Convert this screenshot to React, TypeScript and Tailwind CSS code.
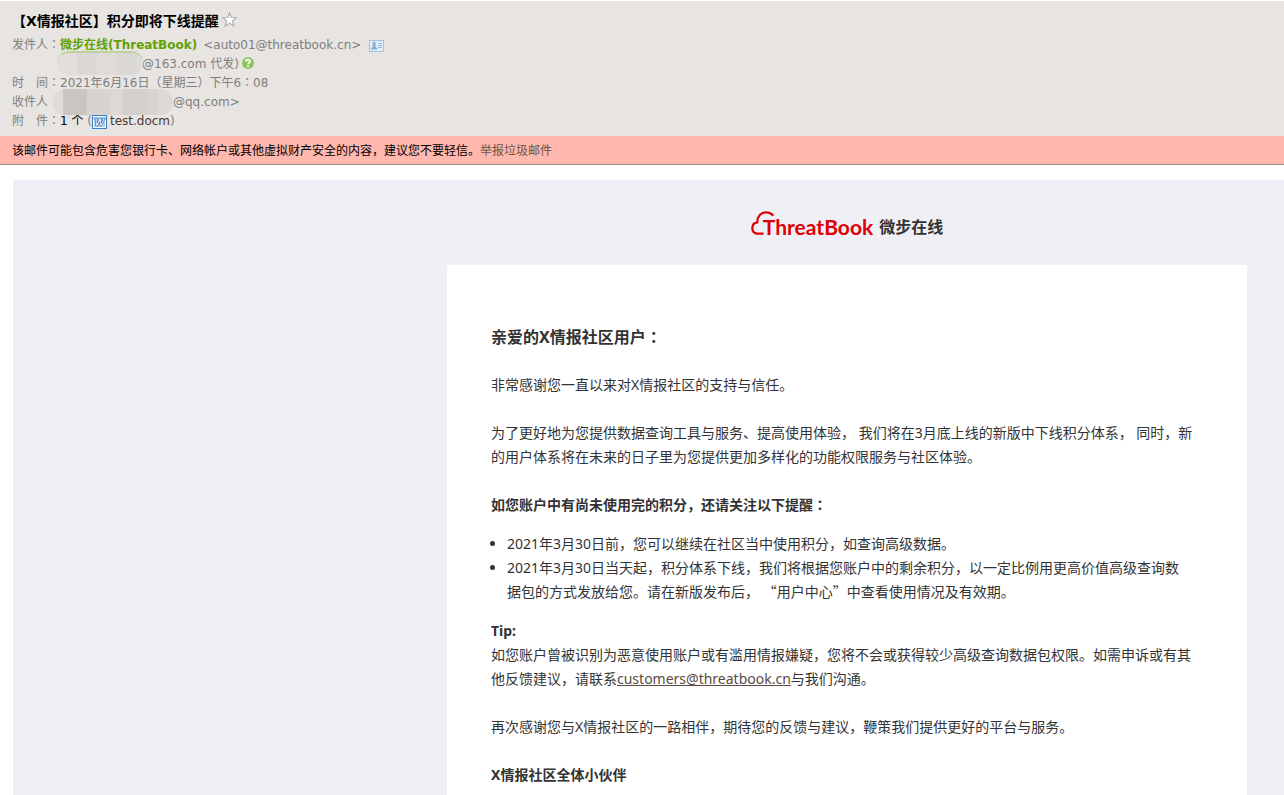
import React from "react";

function StarIcon() {
  return (
    <svg viewBox="0 0 14 14" className="h-[15px] w-[15px]" aria-hidden="true">
      <path d="M7 .8 8.600 5.100 13.300 5.300 9.700 8.300 11 13 7 10.300 3 13 4.300 8.300.7 5.300 5.400 5.100Z" fill="#fff" stroke="#a3abb3" strokeWidth="1" />
    </svg>
  );
}

function ContactIcon() {
  return (
    <svg viewBox="0 0 15 12" className="h-[12px] w-[15px]" aria-hidden="true">
      <rect x=".5" y=".5" width="14" height="11" fill="#e3eef8" stroke="#a3c2e0" />
      <path d="M3.500 3.200a1.600 1.600 0 0 1 3.200 0v1.600c0 1-.4 1.400-.4 1.700 0 .7 2 .8 2 3H2c0-2.200 1.800-2.300 1.800-3 0-.3-.3-.7-.3-1.700Z" fill="#86aed6" />
      <path d="M9 3.500h4M9 5.500h4M9 7.500h4" stroke="#9bb9d6" />
    </svg>
  );
}

function HelpIcon() {
  return (
    <svg viewBox="0 0 12 12" className="h-[12px] w-[12px]" aria-hidden="true">
      <circle cx="6" cy="6" r="6" fill="#8cc65c" />
      <path d="M4 4.600c0-2.600 4-2.600 4-.1 0 1.300-1.900 1.200-1.900 2.800" fill="none" stroke="#fff" strokeWidth="1.600" />
      <rect x="5.200" y="8.300" width="1.700" height="1.700" fill="#fff" />
    </svg>
  );
}

function WordIcon() {
  return (
    <svg viewBox="0 0 15 14" className="h-[14px] w-[15px]" aria-hidden="true">
      <rect x=".5" y=".5" width="14" height="13" fill="#f4f9ff" stroke="#3f7fc4" />
      <rect x="2" y="2" width="11" height="10" fill="#b5d2f0" />
      <path d="M2 3h3.400v1H4.900l.2 4.300L7.400 3h1.700l.2 5.300L11 4h-.8V3H13.500v1h-.8L9.600 11H7.900l-.2-4.400L5.500 11H3.800L3.200 4H2Z" fill="#fff" stroke="#2f6fba" strokeWidth=".7" />
    </svg>
  );
}

function CloudMark() {
  return (
    <svg viewBox="0 -4 24 33" className="h-[33px] w-[24px]" aria-hidden="true">
      <path d="M12.500 23.600H6.200C3.100 23.600 1.300 21.300 1.300 18.200c0-2.900 1.800-5.500 5-5.900C6.200 6.200 10.100 2.400 14.800 2.400c3.200 0 5.800 1.200 7.500 3.300" fill="none" stroke="#dd0005" strokeWidth="2.200" />
    </svg>
  );
}

function Colon() {
  return <span className="font-['Noto_Sans_CJK_TC',sans-serif] leading-none">：</span>;
}

const row = "flex h-[19px] items-center whitespace-pre";

export default function App() {
  return (
    <div className="flex min-h-screen flex-col overflow-x-hidden bg-white font-['Noto_Sans','Noto_Sans_CJK_SC',sans-serif] text-sm leading-6 text-[#333]">
      <header className="mt-px h-[135px] bg-[#e7e4e1] px-3 pt-[11px] font-['DejaVu_Sans','Noto_Sans_CJK_SC',sans-serif] text-xs leading-[19px] text-[#7f7f7f]">
        <div className="flex h-[19px] items-center">
          <h1 className="text-sm leading-[19px] font-bold text-black">【X情报社区】积分即将下线提醒</h1>
          <button type="button" aria-label="星标" className="mb-1 ml-[3px]"><StarIcon /></button>
        </div>
        <div className="mt-[5px]">
          <div className={row}>
            <span className="w-12">发件人<Colon /></span>
            <a href="#sender" className="font-bold text-[#5fa207]">微步在线(ThreatBook)</a>
            <span className="ml-[6px]">&lt;auto01@threatbook.cn&gt;</span>
            <button type="button" aria-label="联系人" className="ml-2"><ContactIcon /></button>
          </div>
          <div className={row}>
            <span className="relative h-full w-[130px]">
              <span className="absolute -top-1 left-[45px] flex h-[24px] w-[86px] overflow-hidden rounded-xl border-t-2 border-[#bdd09f] bg-[#dfdcd9]">
                <span className="w-5 bg-[#e1dedb]" />
                <span className="w-5 bg-[#dad7d4]" />
                <span className="w-5 bg-[#dedbd8]" />
                <span className="w-5 bg-[#dad8d6]" />
              </span>
            </span>
            <span>@163.com 代发)</span>
            <button type="button" aria-label="帮助" className="mb-1 ml-[3px]"><HelpIcon /></button>
          </div>
          <div className={row}>
            <span className="w-12">时　间<Colon /></span>
            <span>2021年6月16日（星期三）下午6<Colon />08</span>
          </div>
          <div className={row}>
            <span className="relative h-full w-[161px]">
              收件人
              <span className="absolute -top-1 left-[41px] flex h-[26px] w-[120px] overflow-hidden rounded-xl bg-[#dcd9d6]">
                <span className="w-[10px] bg-[#dedbd9]" />
                <span className="w-6 bg-[#c9c5c3]" />
                <span className="w-6 bg-[#d6d3d0]" />
                <span className="w-3 bg-[#dbd8d5]" />
                <span className="w-6 bg-[#d2cfcd]" />
                <span className="w-3 bg-[#d6d3d1]" />
              </span>
            </span>
            <span>@qq.com&gt;</span>
          </div>
          <div className={row}>
            <span className="w-12">附　件<Colon /></span>
            <span className="text-black">1 个</span>
            <span> (</span>
            <WordIcon />
            <a href="#attachment" className="ml-[3px] text-[#4b3a30]">test.docm</a>
            <span>)</span>
          </div>
        </div>
      </header>

      <p role="alert" className="h-[29px] border-b border-[#998a80] bg-[#ffb7ae] px-3 text-xs leading-[30px] text-black">
        该邮件可能包含危害您银行卡、网络帐户或其他虚拟财产安全的内容，建议您不要轻信。
        <a href="#report" className="text-[#6b5548]">举报垃圾邮件</a>
      </p>

      <main className="mt-[15px] ml-[13px] flex flex-1 flex-col bg-[#eff0f5] pr-[37px] pl-[434px]">
        <div className="flex h-[85px] items-end justify-center pb-[26px]">
          <CloudMark />
          <span className="-ml-3 font-[Lato,sans-serif] text-[21px] leading-6 font-bold text-[#dd0005]">ThreatBook</span>
          <span className="ml-[6px] text-base leading-6 font-bold">微步在线</span>
        </div>
        <article className="flex-1 bg-white px-11 pt-[60px] pb-2">
          <h2 className="text-base leading-6 font-bold">亲爱的X情报社区用户<Colon /></h2>
          <p className="mt-6">非常感谢您一直以来对X情报社区的支持与信任。</p>
          <p className="mt-6">为了更好地为您提供数据查询工具与服务、提高使用体验， 我们将在3月底上线的新版中下线积分体系， 同时，新的用户体系将在未来的日子里为您提供更加多样化的功能权限服务与社区体验。</p>
          <h3 className="mt-6 font-bold">如您账户中有尚未使用完的积分，还请关注以下提醒<Colon /></h3>
          <ul className="mt-[15px] list-disc pr-3 pl-4">
            <li>2021年3月30日前，您可以继续在社区当中使用积分，如查询高级数据。</li>
            <li>2021年3月30日当天起，积分体系下线，我们将根据您账户中的剩余积分，以一定比例用更高价值高级查询数据包的方式发放给您。请在新版发布后， <span className="font-['Noto_Sans_CJK_SC',sans-serif] leading-none">“用户中心”</span>中查看使用情况及有效期。</li>
          </ul>
          <h3 className="mt-[15px] font-bold">Tip:</h3>
          <p>如您账户曾被识别为恶意使用账户或有滥用情报嫌疑，您将不会或获得较少高级查询数据包权限。如需申诉或有其他反馈建议，请联系<a href="mailto:customers@threatbook.cn" className="text-[#5a4a42] underline">customers@threatbook.cn</a>与我们沟通。</p>
          <p className="mt-6">再次感谢您与X情报社区的一路相伴，期待您的反馈与建议，鞭策我们提供更好的平台与服务。</p>
          <p className="mt-6 font-bold">X情报社区全体小伙伴</p>
        </article>
      </main>
    </div>
  );
}
